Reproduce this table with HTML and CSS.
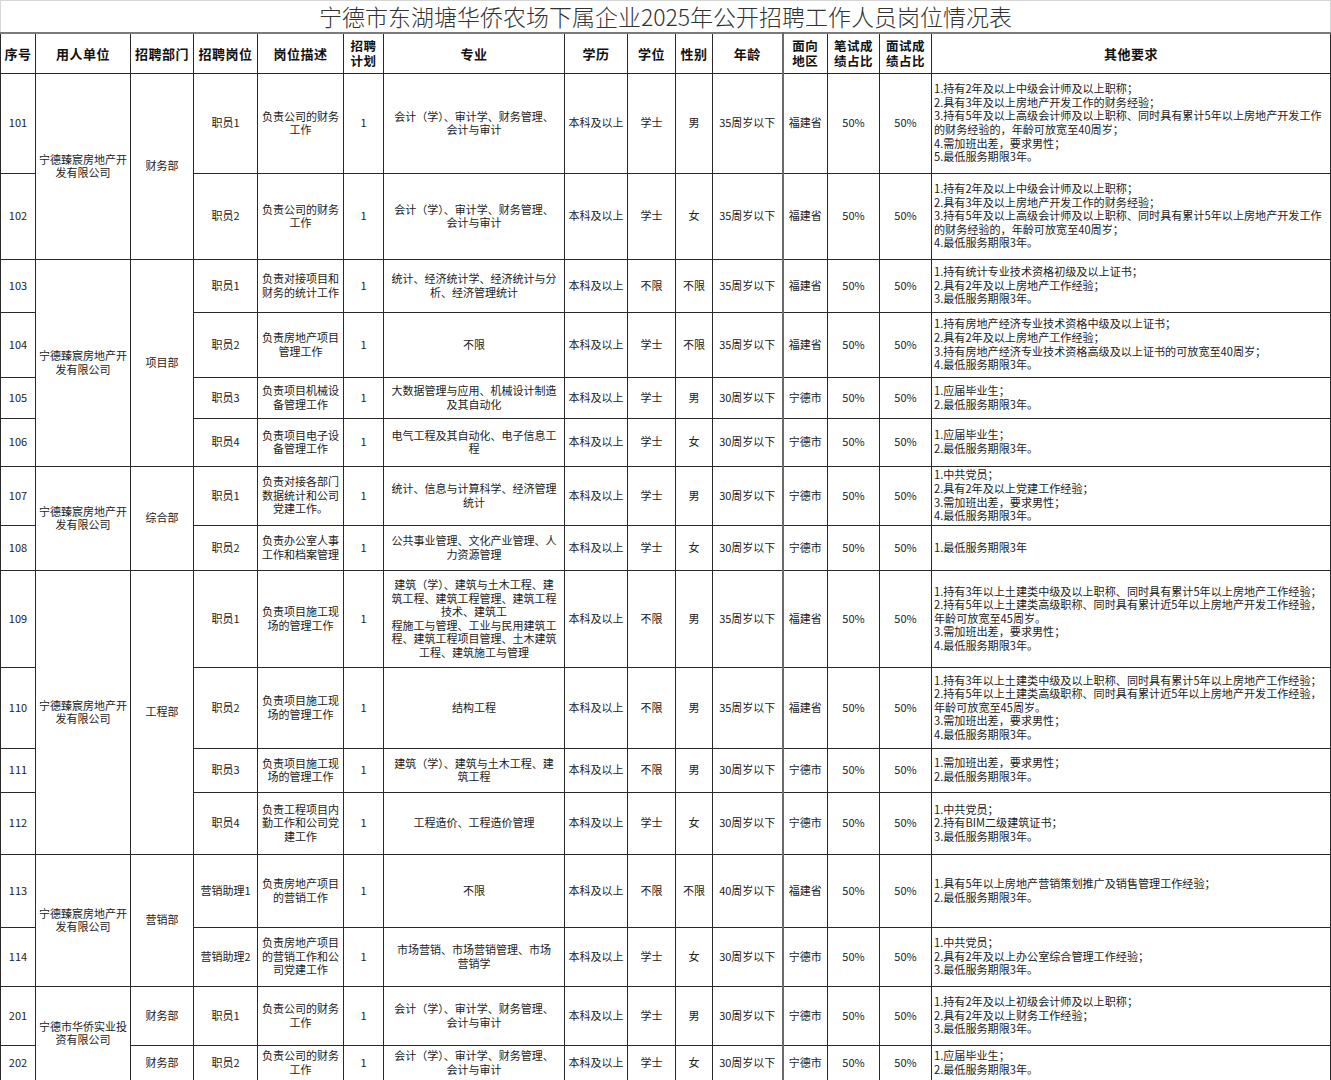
FILE: index.html
```html
<!DOCTYPE html>
<html lang="zh-CN">
<head>
<meta charset="utf-8">
<title>岗位情况表</title>
<link rel="stylesheet" href="styles.css">
</head>
<body>
<div class="sheet">
  <div class="title">宁德市东湖塘华侨农场下属企业2025年公开招聘工作人员岗位情况表</div>
  <table class="grid">
    <colgroup>
      <col class="c1"><col class="c2"><col class="c3"><col class="c4"><col class="c5">
      <col class="c6"><col class="c7"><col class="c8"><col class="c9"><col class="c10">
      <col class="c11"><col class="c12"><col class="c13"><col class="c14"><col class="c15">
    </colgroup>
    <thead>
      <tr class="h40">
        <th>序号</th><th>用人单位</th><th>招聘部门</th><th>招聘岗位</th><th>岗位描述</th>
        <th class="two">招聘<br>计划</th><th>专业</th><th>学历</th><th>学位</th><th>性别</th>
        <th class="age">年龄</th><th class="area two">面向<br>地区</th><th class="two">笔试成<br>绩占比</th><th class="two">面试成<br>绩占比</th><th>其他要求</th>
      </tr>
    </thead>
    <tbody>
      <tr class="h100">
        <td>101</td><td rowspan="2">宁德臻宸房地产开<br>发有限公司</td><td rowspan="2">财务部</td>
        <td>职员1</td><td>负责公司的财务<br>工作</td><td>1</td><td>会计（学）、审计学、财务管理、<br>会计与审计</td>
        <td>本科及以上</td><td>学士</td><td>男</td><td class="age">35周岁以下</td><td class="area">福建省</td><td>50%</td><td>50%</td>
        <td class="req">1.持有2年及以上中级会计师及以上职称；<br>2.具有3年及以上房地产开发工作的财务经验；<br>3.持有5年及以上高级会计师及以上职称、同时具有累计5年以上房地产开发工作<br>的财务经验的，年龄可放宽至40周岁；<br>4.需加班出差，要求男性；<br>5.最低服务期限3年。</td>
      </tr>
      <tr class="h86">
        <td>102</td>
        <td>职员2</td><td>负责公司的财务<br>工作</td><td>1</td><td>会计（学）、审计学、财务管理、<br>会计与审计</td>
        <td>本科及以上</td><td>学士</td><td>女</td><td class="age">35周岁以下</td><td class="area">福建省</td><td>50%</td><td>50%</td>
        <td class="req">1.持有2年及以上中级会计师及以上职称；<br>2.具有3年及以上房地产开发工作的财务经验；<br>3.持有5年及以上高级会计师及以上职称、同时具有累计5年以上房地产开发工作<br>的财务经验的，年龄可放宽至40周岁；<br>4.最低服务期限3年。</td>
      </tr>
      <tr class="h53">
        <td>103</td><td rowspan="4">宁德臻宸房地产开<br>发有限公司</td><td rowspan="4">项目部</td>
        <td>职员1</td><td>负责对接项目和<br>财务的统计工作</td><td>1</td><td>统计、经济统计学、经济统计与分<br>析、经济管理统计</td>
        <td>本科及以上</td><td>不限</td><td>不限</td><td class="age">35周岁以下</td><td class="area">福建省</td><td>50%</td><td>50%</td>
        <td class="req">1.持有统计专业技术资格初级及以上证书；<br>2.具有2年及以上房地产工作经验；<br>3.最低服务期限3年。</td>
      </tr>
      <tr class="h65">
        <td>104</td>
        <td>职员2</td><td>负责房地产项目<br>管理工作</td><td>1</td><td>不限</td>
        <td>本科及以上</td><td>学士</td><td>不限</td><td class="age">35周岁以下</td><td class="area">福建省</td><td>50%</td><td>50%</td>
        <td class="req">1.持有房地产经济专业技术资格中级及以上证书；<br>2.具有2年及以上房地产工作经验；<br>3.持有房地产经济专业技术资格高级及以上证书的可放宽至40周岁；<br>4.最低服务期限3年。</td>
      </tr>
      <tr class="h41">
        <td>105</td>
        <td>职员3</td><td>负责项目机械设<br>备管理工作</td><td>1</td><td>大数据管理与应用、机械设计制造<br>及其自动化</td>
        <td>本科及以上</td><td>学士</td><td>男</td><td class="age">30周岁以下</td><td class="area">宁德市</td><td>50%</td><td>50%</td>
        <td class="req">1.应届毕业生；<br>2.最低服务期限3年。</td>
      </tr>
      <tr class="h48">
        <td>106</td>
        <td>职员4</td><td>负责项目电子设<br>备管理工作</td><td>1</td><td>电气工程及其自动化、电子信息工<br>程</td>
        <td>本科及以上</td><td>学士</td><td>女</td><td class="age">30周岁以下</td><td class="area">宁德市</td><td>50%</td><td>50%</td>
        <td class="req">1.应届毕业生；<br>2.最低服务期限3年。</td>
      </tr>
      <tr class="h59">
        <td>107</td><td rowspan="2">宁德臻宸房地产开<br>发有限公司</td><td rowspan="2">综合部</td>
        <td>职员1</td><td>负责对接各部门<br>数据统计和公司<br>党建工作。</td><td>1</td><td>统计、信息与计算科学、经济管理<br>统计</td>
        <td>本科及以上</td><td>学士</td><td>男</td><td class="age">30周岁以下</td><td class="area">宁德市</td><td>50%</td><td>50%</td>
        <td class="req">1.中共党员；<br>2.具有2年及以上党建工作经验；<br>3.需加班出差，要求男性；<br>4.最低服务期限3年。</td>
      </tr>
      <tr class="h45">
        <td>108</td>
        <td>职员2</td><td>负责办公室人事<br>工作和档案管理</td><td>1</td><td>公共事业管理、文化产业管理、人<br>力资源管理</td>
        <td>本科及以上</td><td>学士</td><td>女</td><td class="age">30周岁以下</td><td class="area">宁德市</td><td>50%</td><td>50%</td>
        <td class="req">1.最低服务期限3年</td>
      </tr>
      <tr class="h97">
        <td>109</td><td rowspan="4">宁德臻宸房地产开<br>发有限公司</td><td rowspan="4">工程部</td>
        <td>职员1</td><td>负责项目施工现<br>场的管理工作</td><td>1</td><td>建筑（学）、建筑与土木工程、建<br>筑工程、建筑工程管理、建筑工程<br>技术、建筑工<br>程施工与管理、工业与民用建筑工<br>程、建筑工程项目管理、土木建筑<br>工程、建筑施工与管理</td>
        <td>本科及以上</td><td>不限</td><td>男</td><td class="age">35周岁以下</td><td class="area">福建省</td><td>50%</td><td>50%</td>
        <td class="req">1.持有3年以上土建类中级及以上职称、同时具有累计5年以上房地产工作经验；<br>2.持有5年以上土建类高级职称、同时具有累计近5年以上房地产开发工作经验，<br>年龄可放宽至45周岁。<br>3.需加班出差，要求男性；<br>4.最低服务期限3年。</td>
      </tr>
      <tr class="h81">
        <td>110</td>
        <td>职员2</td><td>负责项目施工现<br>场的管理工作</td><td>1</td><td>结构工程</td>
        <td>本科及以上</td><td>不限</td><td>男</td><td class="age">35周岁以下</td><td class="area">福建省</td><td>50%</td><td>50%</td>
        <td class="req">1.持有3年以上土建类中级及以上职称、同时具有累计5年以上房地产工作经验；<br>2.持有5年以上土建类高级职称、同时具有累计近5年以上房地产开发工作经验，<br>年龄可放宽至45周岁。<br>3.需加班出差，要求男性；<br>4.最低服务期限3年。</td>
      </tr>
      <tr class="h44">
        <td>111</td>
        <td>职员3</td><td>负责项目施工现<br>场的管理工作</td><td>1</td><td>建筑（学）、建筑与土木工程、建<br>筑工程</td>
        <td>本科及以上</td><td>不限</td><td>男</td><td class="age">30周岁以下</td><td class="area">宁德市</td><td>50%</td><td>50%</td>
        <td class="req">1.需加班出差，要求男性；<br>2.最低服务期限3年。</td>
      </tr>
      <tr class="h62">
        <td>112</td>
        <td>职员4</td><td>负责工程项目内<br>勤工作和公司党<br>建工作</td><td>1</td><td>工程造价、工程造价管理</td>
        <td>本科及以上</td><td>学士</td><td>女</td><td class="age">30周岁以下</td><td class="area">宁德市</td><td>50%</td><td>50%</td>
        <td class="req">1.中共党员；<br>2.持有BIM二级建筑证书；<br>3.最低服务期限3年。</td>
      </tr>
      <tr class="h73">
        <td>113</td><td rowspan="2">宁德臻宸房地产开<br>发有限公司</td><td rowspan="2">营销部</td>
        <td>营销助理1</td><td>负责房地产项目<br>的营销工作</td><td>1</td><td>不限</td>
        <td>本科及以上</td><td>不限</td><td>不限</td><td class="age">40周岁以下</td><td class="area">福建省</td><td>50%</td><td>50%</td>
        <td class="req">1.具有5年以上房地产营销策划推广及销售管理工作经验；<br>2.最低服务期限3年。</td>
      </tr>
      <tr class="h59">
        <td>114</td>
        <td>营销助理2</td><td>负责房地产项目<br>的营销工作和公<br>司党建工作</td><td>1</td><td>市场营销、市场营销管理、市场<br>营销学</td>
        <td>本科及以上</td><td>学士</td><td>女</td><td class="age">30周岁以下</td><td class="area">宁德市</td><td>50%</td><td>50%</td>
        <td class="req">1.中共党员；<br>2.具有2年及以上办公室综合管理工作经验；<br>3.最低服务期限3年。</td>
      </tr>
      <tr class="h59">
        <td>201</td><td rowspan="2">宁德市华侨实业投<br>资有限公司</td><td>财务部</td>
        <td>职员1</td><td>负责公司的财务<br>工作</td><td>1</td><td>会计（学）、审计学、财务管理、<br>会计与审计</td>
        <td>本科及以上</td><td>学士</td><td>男</td><td class="age">30周岁以下</td><td class="area">宁德市</td><td>50%</td><td>50%</td>
        <td class="req">1.持有2年及以上初级会计师及以上职称；<br>2.具有2年及以上财务工作经验；<br>3.最低服务期限3年。</td>
      </tr>
      <tr class="h35">
        <td>202</td><td>财务部</td>
        <td>职员2</td><td>负责公司的财务<br>工作</td><td>1</td><td>会计（学）、审计学、财务管理、<br>会计与审计</td>
        <td>本科及以上</td><td>学士</td><td>女</td><td class="age">30周岁以下</td><td class="area">宁德市</td><td>50%</td><td>50%</td>
        <td class="req">1.应届毕业生；<br>2.最低服务期限3年。</td>
      </tr>
    </tbody>
  </table>
</div>
</body>
</html>
```
FILE: styles.css
```css
* { box-sizing: border-box; }
html, body { margin: 0; padding: 0; background: #fff; }
body {
  font-family: "Noto Sans CJK SC", "Noto Sans", sans-serif;
  color: #222;
}
.sheet { width: 1331px; }
.title {
  height: 32px;
  border: 1px solid #d6d6d6;
  border-bottom: none;
  text-align: center;
  font-size: 23px;
  line-height: 30px;
  font-weight: 300;
  color: #333;
  white-space: nowrap;
}
.grid {
  width: 1331px;
  border-collapse: collapse;
  table-layout: fixed;
  font-size: 11px;
  line-height: 13.5px;
}
.c1 { width: 35px; }
.c2 { width: 95px; }
.c3 { width: 63px; }
.c4 { width: 64px; }
.c5 { width: 86px; }
.c6 { width: 40px; }
.c7 { width: 181px; }
.c8 { width: 63px; }
.c9 { width: 48px; }
.c10 { width: 37px; }
.c11 { width: 70px; }
.c12 { width: 45px; }
.c13 { width: 52px; }
.c14 { width: 52px; }
.c15 { width: 399px; }
.grid th, .grid td {
  border: 1px solid #2a2a2a;
  padding: 0 1px;
  text-align: center;
  vertical-align: middle;
  overflow: hidden;
  white-space: nowrap;
}
.grid th {
  font-weight: bold;
  font-size: 13px;
  line-height: 15px;
  letter-spacing: 0.5px;
  color: #111;
}
.grid th.two { font-size: 12.5px; line-height: 15px; }
.grid thead th { border-top: 2px solid #7a7a7a; }
.grid .age { border-right: 2px solid #6a6a6a; }
.grid td.req {
  text-align: left;
  padding-left: 2px;
  font-size: 11.1px;
  line-height: 13.6px;
}
.h35 { height: 35px; }
.h40 { height: 40px; }
.h41 { height: 41px; }
.h44 { height: 44px; }
.h45 { height: 45px; }
.h48 { height: 48px; }
.h53 { height: 53px; }
.h59 { height: 59px; }
.h62 { height: 62px; }
.h65 { height: 65px; }
.h73 { height: 73px; }
.h81 { height: 81px; }
.h86 { height: 86px; }
.h97 { height: 97px; }
.h100 { height: 100px; }
```
